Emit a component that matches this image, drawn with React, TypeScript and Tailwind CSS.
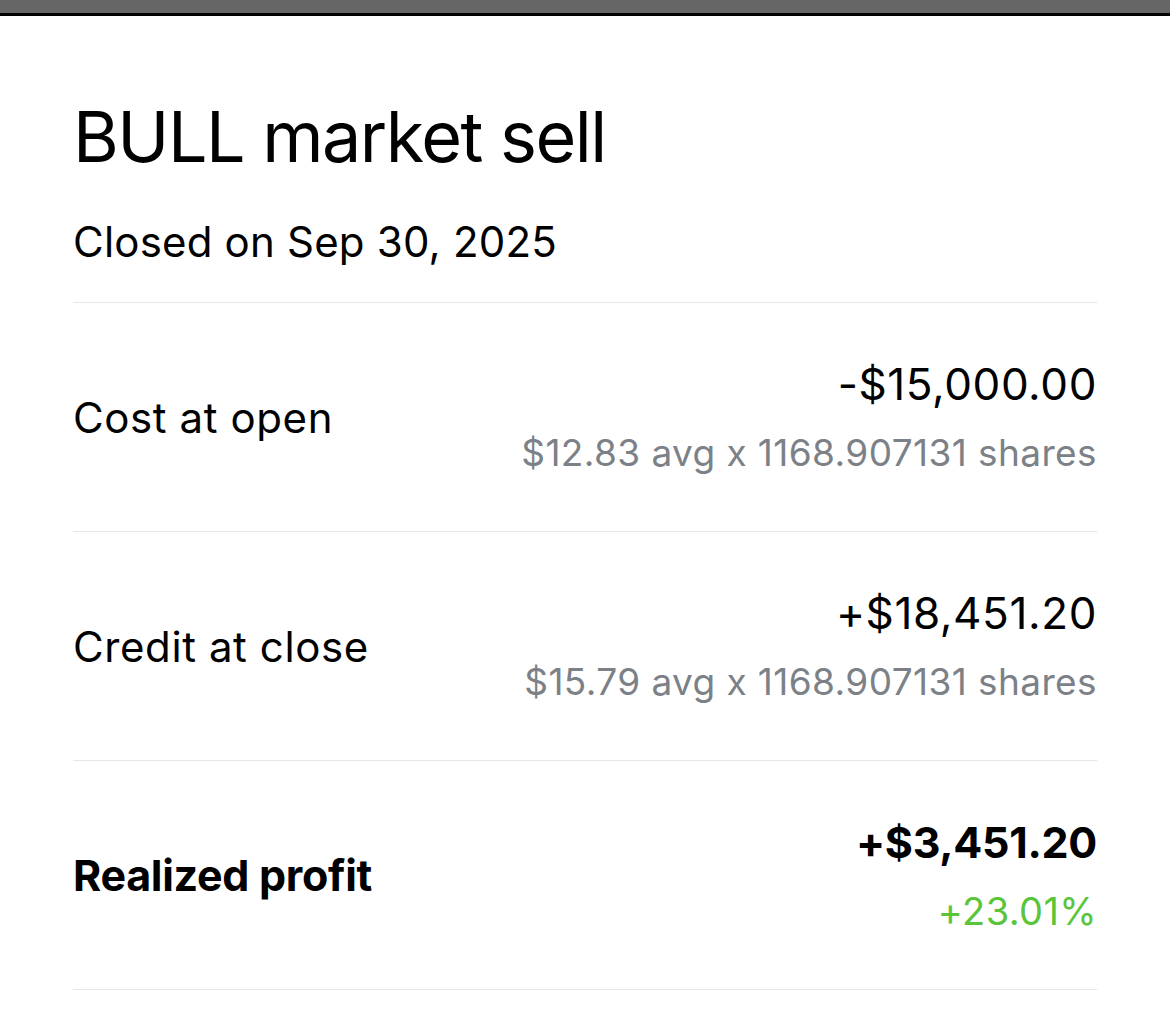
import React from 'react';

interface RowProps {
  label: string;
  value: string;
  sub: string;
  bold?: boolean;
  subClassName?: string;
}

function Row({ label, value, sub, bold = false, subClassName = 'text-[#7c8187] text-[37px] tracking-[0.4px]' }: RowProps) {
  return (
    <div className="flex items-center justify-between border-b border-[#e6e6e6] h-[229px]">
      <p className={bold ? 'text-[43px] font-bold tracking-[-0.3px]' : 'text-[42px] tracking-[0.6px]'}>{label}</p>
      <div className="flex flex-col items-end">
        <p className={bold ? 'text-[43px] font-bold leading-[56px] tracking-[-0.3px]' : 'text-[44px] leading-[56px] tracking-[0.6px]'}>
          {value}
        </p>
        <p className={`leading-[52px] mt-[15px] ${subClassName}`}>{sub}</p>
      </div>
    </div>
  );
}

export default function App() {
  return (
    <div className="min-h-screen bg-white text-black" style={{ fontFamily: 'Inter, "Liberation Sans", sans-serif' }}>
      <div className="h-[13px] bg-[#666666]" />
      <div className="h-[3px] bg-black" />
      <div className="px-[73px]">
        <h1 className="text-[70px] leading-[80px] tracking-[-1.5px] pt-[81px]">BULL market sell</h1>
        <p className="text-[42px] leading-[56px] mt-[37px] tracking-[0.2px]">Closed on Sep 30, 2025</p>
        <div className="border-b border-[#e6e6e6] mt-[32px]" />
        <Row label="Cost at open" value="-$15,000.00" sub="$12.83 avg x 1168.907131 shares" />
        <Row label="Credit at close" value="+$18,451.20" sub="$15.79 avg x 1168.907131 shares" />
        <Row
          label="Realized profit"
          value="+$3,451.20"
          sub="+23.01%"
          bold
          subClassName="text-[#5ac53b] text-[38px] tracking-[0.4px]"
        />
      </div>
    </div>
  );
}
